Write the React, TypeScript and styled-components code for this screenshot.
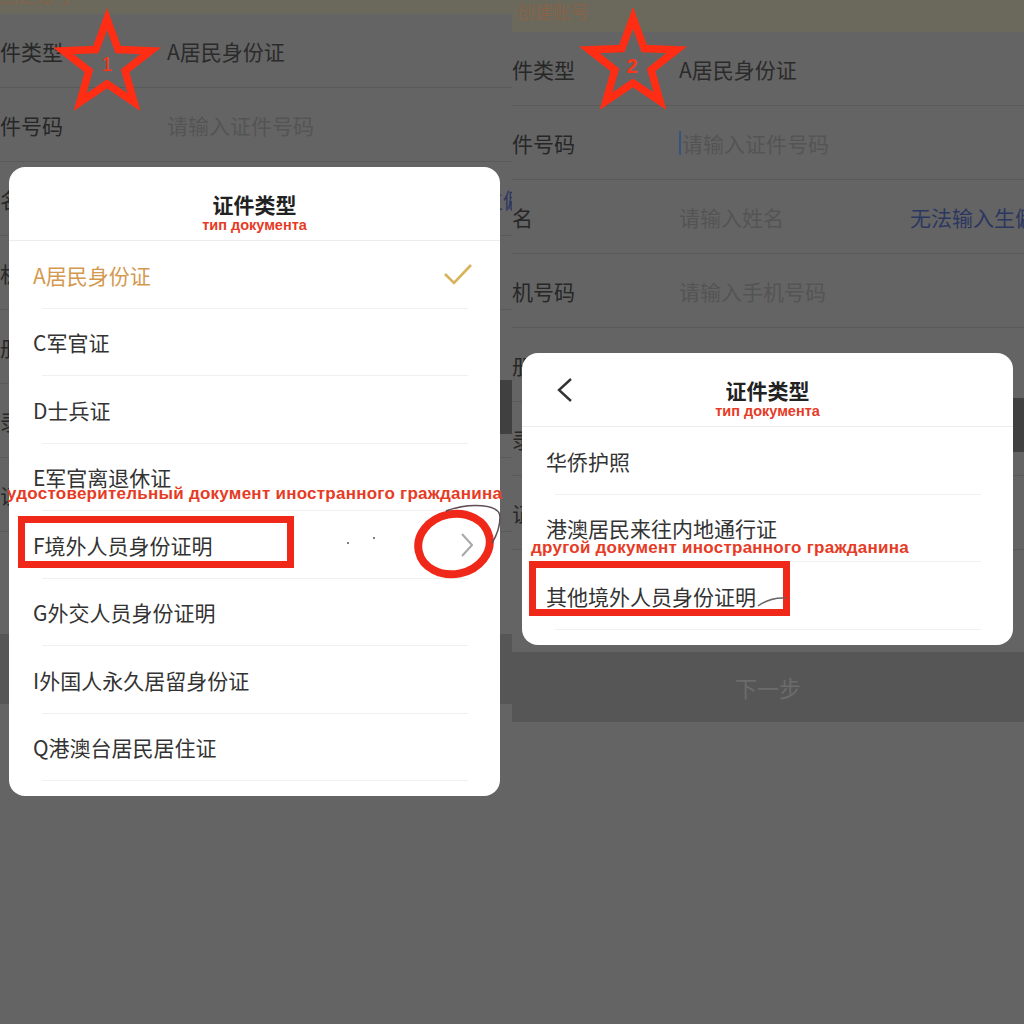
import React from 'react';
import styled, { createGlobalStyle } from 'styled-components';

const red = '#f0281a';
const annotationRed = '#e63b25';

const GlobalStyle = createGlobalStyle`
  html, body {
    margin: 0;
    padding: 0;
    background: #636463;
  }
  body {
    font-family: "Noto Sans CJK SC", "Noto Sans", sans-serif;
  }
`;

const Page = styled.div`
  display: grid;
  grid-template-columns: 512px 512px;
  width: 1024px;
  height: 1024px;
  overflow: hidden;
`;

const Screen = styled.div`
  position: relative;
  height: 1024px;
  overflow: hidden;
  background: #646464;
  display: flex;
  flex-direction: column;
`;

type BarProps = { $height: number; $pad: number; $indent: number };

const TopBar = styled.div<BarProps>`
  flex: none;
  height: ${({ $height }) => $height}px;
  box-sizing: border-box;
  display: flex;
  align-items: flex-end;
  padding: 0 0 ${({ $pad }) => $pad}px ${({ $indent }) => $indent}px;
  background: #6a695b;
  overflow: hidden;
`;

const BarTitle = styled.span`
  font-size: 18px;
  line-height: 20px;
  color: #86634a;
  white-space: nowrap;
`;

const FormRow = styled.div`
  flex: none;
  height: 74px;
  box-sizing: border-box;
  display: flex;
  align-items: center;
  border-bottom: 1px solid #5a5a5a;
  font-size: 21px;
  white-space: nowrap;
`;

const Label = styled.span`
  flex: none;
  width: 188px;
  margin-left: -21px;
  color: #272727;
`;

const Value = styled.span<{ $placeholder?: boolean }>`
  display: flex;
  align-items: center;
  color: ${({ $placeholder }) => ($placeholder ? '#545454' : '#2b2b2b')};
`;

const Caret = styled.span`
  width: 2px;
  height: 24px;
  margin-right: 1px;
  background: #35557f;
`;

const Link = styled.span`
  flex: none;
  margin-left: auto;
  margin-right: -33px;
  color: #2b3760;
`;

const SideButton = styled.span`
  flex: none;
  align-self: flex-start;
  margin: -4px 0 0 auto;
  width: 90px;
  height: 54px;
  background: #404040;
`;

const NextBar = styled.div`
  flex: none;
  height: 70px;
  margin-top: 102px;
  display: flex;
  align-items: center;
  justify-content: center;
  background: #565656;
  color: #6c6c6c;
  font-size: 22px;
`;

type SheetProps = { $top: number; $left: number };

const Sheet = styled.div<SheetProps>`
  position: absolute;
  top: ${({ $top }) => $top}px;
  left: ${({ $left }) => $left}px;
  width: 491px;
  padding-bottom: 15px;
  background: #fff;
  border-radius: 16px;
`;

const SheetHeader = styled.div`
  height: 74px;
  box-sizing: border-box;
  display: grid;
  grid-template-columns: 1fr auto 1fr;
  border-bottom: 1px solid #ececec;
`;

const BackButton = styled.span`
  padding: 25px 0 0 35px;
`;

const TitleBlock = styled.div`
  display: flex;
  flex-direction: column;
  align-items: center;
  padding-top: 24px;
`;

const SheetTitle = styled.span`
  font-size: 21px;
  line-height: 26px;
  font-weight: 700;
  color: #222;
`;

const Subtitle = styled.span`
  font-family: "Liberation Sans", Arial, sans-serif;
  font-size: 14.5px;
  line-height: 16px;
  font-weight: 700;
  color: ${annotationRed};
`;

const Option = styled.div<{ $selected?: boolean }>`
  position: relative;
  height: 67.5px;
  display: flex;
  align-items: center;
  justify-content: space-between;
  padding: 0 27px 0 24px;
  font-size: 21px;
  color: ${({ $selected }) => ($selected ? '#d4994f' : '#333')};

  &::after {
    content: '';
    position: absolute;
    left: 33px;
    right: 32px;
    bottom: 0;
    height: 1px;
    background: #f0f0f0;
  }
`;

const Overlay = styled.svg`
  position: absolute;
  top: 0;
  left: 0;
  width: 512px;
  height: 1024px;
  pointer-events: none;
`;

type PosProps = { $x: number; $y: number };

const Note = styled.span<PosProps>`
  position: absolute;
  left: ${({ $x }) => $x}px;
  top: ${({ $y }) => $y}px;
  font-family: "Liberation Sans", Arial, sans-serif;
  font-size: 17px;
  line-height: 18px;
  font-weight: 700;
  letter-spacing: 0.25px;
  color: ${annotationRed};
  white-space: nowrap;
`;

const RedBox = styled.div<PosProps & { $w: number; $h: number }>`
  position: absolute;
  left: ${({ $x }) => $x}px;
  top: ${({ $y }) => $y}px;
  width: ${({ $w }) => $w}px;
  height: ${({ $h }) => $h}px;
  box-sizing: border-box;
  border: 7px solid ${red};
`;

const StarNumber = styled.span<PosProps & { $bold?: boolean }>`
  position: absolute;
  left: ${({ $x }) => $x - 10}px;
  top: ${({ $y }) => $y - 13}px;
  width: 20px;
  text-align: center;
  font-family: "Liberation Sans", Arial, sans-serif;
  font-size: 20px;
  line-height: 26px;
  font-weight: ${({ $bold }) => ($bold ? 700 : 400)};
  color: #ff3418;
`;

const starPoints = (cx: number, cy: number, R: number, r: number) =>
  Array.from({ length: 10 }, (_, i) => {
    const a = -Math.PI / 2 + (i * Math.PI) / 5;
    const rad = i % 2 === 0 ? R : r;
    return `${(cx + rad * Math.cos(a)).toFixed(1)},${(cy + rad * Math.sin(a)).toFixed(1)}`;
  }).join(' ');

const Star = ({ cx, cy }: { cx: number; cy: number }) => (
  <polygon
    points={starPoints(cx, cy, 46, 19)}
    fill="none"
    stroke="#ff2d14"
    strokeWidth={7.5}
  />
);

const Check = () => (
  <svg width="30" height="24" viewBox="0 0 30 24">
    <polyline points="2,11 11,20 28,2" fill="none" stroke="#d8b35c" strokeWidth="2.6" />
  </svg>
);

const ChevronRight = () => (
  <svg width="12" height="24" viewBox="0 0 12 24">
    <polyline points="1,1 11,12 1,23" fill="none" stroke="#a8a8a8" strokeWidth="2" />
  </svg>
);

const ChevronLeft = () => (
  <svg width="16" height="24" viewBox="0 0 16 24">
    <polyline points="14,1 2,12 14,23" fill="none" stroke="#333" strokeWidth="2.4" />
  </svg>
);

type Opt = { label: string; selected?: boolean; more?: boolean };

const leftOptions: Opt[] = [
  { label: 'A居民身份证', selected: true },
  { label: 'C军官证' },
  { label: 'D士兵证' },
  { label: 'E军官离退休证' },
  { label: 'F境外人员身份证明', more: true },
  { label: 'G外交人员身份证明' },
  { label: 'I外国人永久居留身份证' },
  { label: 'Q港澳台居民居住证' },
];

const rightOptions: Opt[] = [
  { label: '华侨护照' },
  { label: '港澳居民来往内地通行证' },
  { label: '其他境外人员身份证明' },
];

const Form = ({ typing }: { typing?: boolean }) => (
  <>
    <FormRow>
      <Label>证件类型</Label>
      <Value>A居民身份证</Value>
    </FormRow>
    <FormRow>
      <Label>证件号码</Label>
      <Value $placeholder>
        {typing && <Caret />}
        请输入证件号码
      </Value>
    </FormRow>
    <FormRow>
      <Label>姓名</Label>
      <Value $placeholder>请输入姓名</Value>
      <Link>无法输入生僻字</Link>
    </FormRow>
    <FormRow>
      <Label>手机号码</Label>
      <Value $placeholder>请输入手机号码</Value>
    </FormRow>
    <FormRow>
      <Label>注册地区</Label>
    </FormRow>
    <FormRow>
      <Label>登录密码</Label>
      <SideButton />
    </FormRow>
    <FormRow>
      <Label>验证码</Label>
    </FormRow>
    <NextBar>下一步</NextBar>
  </>
);

const TypeSheet = ({
  top,
  left,
  options,
  back,
}: {
  top: number;
  left: number;
  options: Opt[];
  back?: boolean;
}) => (
  <Sheet $top={top} $left={left}>
    <SheetHeader>
      <BackButton>{back && <ChevronLeft />}</BackButton>
      <TitleBlock>
        <SheetTitle>证件类型</SheetTitle>
        <Subtitle>тип документа</Subtitle>
      </TitleBlock>
    </SheetHeader>
    {options.map((o) => (
      <Option key={o.label} $selected={o.selected}>
        <span>{o.label}</span>
        {o.selected && <Check />}
        {o.more && <ChevronRight />}
      </Option>
    ))}
  </Sheet>
);

export default function App() {
  return (
    <>
      <GlobalStyle />
      <Page>
        <Screen>
          <TopBar $height={14} $pad={9} $indent={0}>
            <BarTitle>创建账号</BarTitle>
          </TopBar>
          <Form />
          <TypeSheet top={167} left={9} options={leftOptions} />
          <Note $x={7} $y={485}>удостоверительный документ иностранного гражданина</Note>
          <RedBox $x={18} $y={516} $w={276} $h={52} />
          <Overlay viewBox="0 0 512 1024">
            <Star cx={107} cy={65} />
            <ellipse
              cx={454}
              cy={544}
              rx={36}
              ry={30}
              transform="rotate(-12 454 544)"
              fill="none"
              stroke={red}
              strokeWidth={8}
            />
            <path
              d="M446 511 C470 502 500 504 500 517 C500 528 497 535 492 543"
              fill="none"
              stroke="#5e4d58"
              strokeWidth={1.5}
            />
            <circle cx={348} cy={543} r={1} fill="#555" />
            <circle cx={374} cy={538} r={1} fill="#555" />
          </Overlay>
          <StarNumber $x={107} $y={64}>1</StarNumber>
        </Screen>

        <Screen>
          <TopBar $height={32} $pad={11} $indent={5}>
            <BarTitle>创建账号</BarTitle>
          </TopBar>
          <Form typing />
          <TypeSheet top={353} left={10} options={rightOptions} back />
          <Note $x={19} $y={539}>другой документ иностранного гражданина</Note>
          <RedBox $x={17} $y={561} $w={261} $h={55} />
          <Overlay viewBox="0 0 512 1024">
            <Star cx={121} cy={64} />
            <path d="M246 606 Q258 597 274 598" fill="none" stroke="#666" strokeWidth={1.5} />
          </Overlay>
          <StarNumber $x={120} $y={66} $bold>2</StarNumber>
        </Screen>
      </Page>
    </>
  );
}
